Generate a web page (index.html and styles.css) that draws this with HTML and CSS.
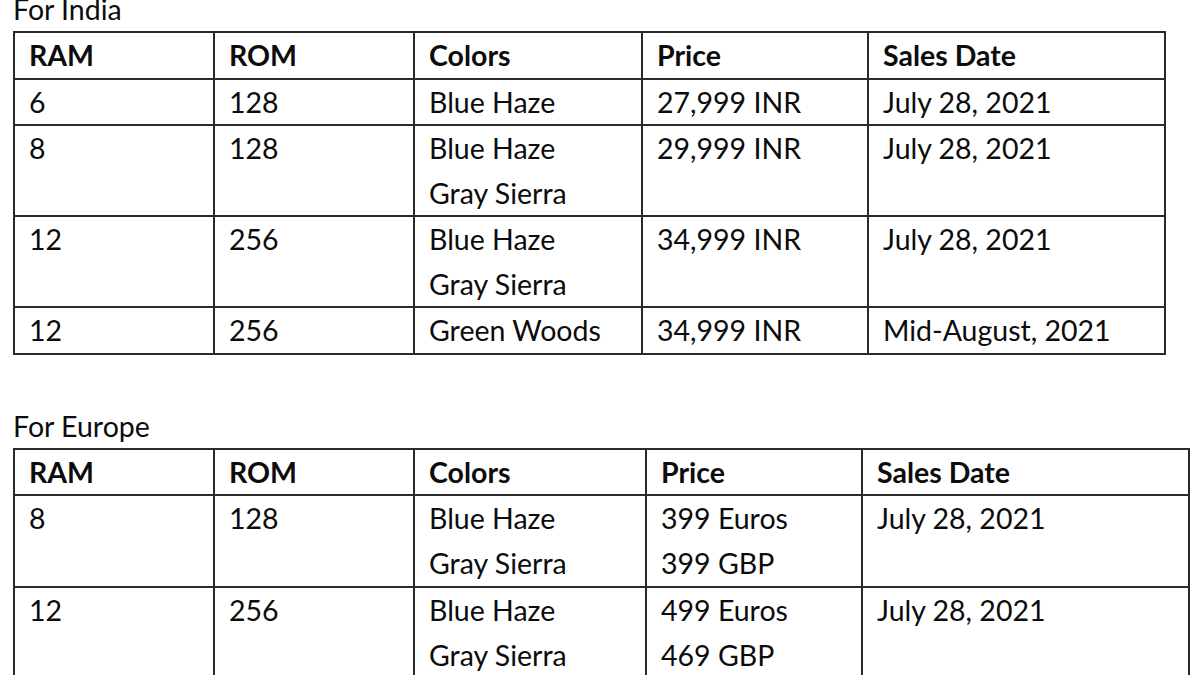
FILE: index.html
```html
<!DOCTYPE html>
<html lang="en">
<head>
<meta charset="utf-8">
<title>Pricing</title>
<link rel="stylesheet" href="styles.css">
</head>
<body>
<main class="page">
  <section class="region region-india">
    <div class="region-title">For India</div>
    <table class="spec spec-india">
      <colgroup>
        <col class="c-ram"><col class="c-rom"><col class="c-colors"><col class="c-price"><col class="c-date">
      </colgroup>
      <thead>
        <tr><th>RAM</th><th>ROM</th><th>Colors</th><th>Price</th><th>Sales Date</th></tr>
      </thead>
      <tbody>
        <tr><td>6</td><td>128</td><td>Blue Haze</td><td>27,999 INR</td><td>July 28, 2021</td></tr>
        <tr><td>8</td><td>128</td><td>Blue Haze<br>Gray Sierra</td><td>29,999 INR</td><td>July 28, 2021</td></tr>
        <tr><td>12</td><td>256</td><td>Blue Haze<br>Gray Sierra</td><td>34,999 INR</td><td>July 28, 2021</td></tr>
        <tr><td>12</td><td>256</td><td>Green Woods</td><td>34,999 INR</td><td>Mid-August, 2021</td></tr>
      </tbody>
    </table>
  </section>
  <section class="region region-europe">
    <div class="region-title">For Europe</div>
    <table class="spec spec-europe">
      <colgroup>
        <col class="c-ram"><col class="c-rom"><col class="c-colors"><col class="c-price"><col class="c-date">
      </colgroup>
      <thead>
        <tr><th>RAM</th><th>ROM</th><th>Colors</th><th>Price</th><th>Sales Date</th></tr>
      </thead>
      <tbody>
        <tr><td>8</td><td>128</td><td>Blue Haze<br>Gray Sierra</td><td>399 Euros<br>399 GBP</td><td>July 28, 2021</td></tr>
        <tr><td>12</td><td>256</td><td>Blue Haze<br>Gray Sierra</td><td>499 Euros<br>469 GBP</td><td>July 28, 2021</td></tr>
      </tbody>
    </table>
  </section>
</main>
</body>
</html>
```

FILE: styles.css
```css
html, body {
  margin: 0;
  padding: 0;
  background: #ffffff;
}

body {
  font-family: "Lato", "Open Sans", sans-serif;
  font-size: 28.5px;
  color: #0c0c0c;
  overflow: hidden;
  height: 675px;
}

.page {
  padding-left: 13px;
}

.region-india {
  margin-top: -6px;
}

.region-europe {
  margin-top: 56px;
}

.region-title {
  line-height: 30px;
  margin-bottom: 7px;
}

.spec {
  border-collapse: collapse;
  table-layout: fixed;
}

.spec th,
.spec td {
  border: 2px solid #2b2b2b;
  padding: 0 0 0 14px;
  line-height: 44.5px;
  text-align: left;
  vertical-align: top;
  white-space: nowrap;
}

.spec th {
  font-weight: 700;
}

.spec-europe td {
  line-height: 45px;
}

.spec-india { width: 1151px; }
.spec-india .c-ram { width: 200px; }
.spec-india .c-rom { width: 200px; }
.spec-india .c-colors { width: 228px; }
.spec-india .c-price { width: 226px; }
.spec-india .c-date { width: 297px; }

.spec-europe { width: 1175px; }
.spec-europe .c-ram { width: 200px; }
.spec-europe .c-rom { width: 200px; }
.spec-europe .c-colors { width: 232px; }
.spec-europe .c-price { width: 216px; }
.spec-europe .c-date { width: 327px; }
```
